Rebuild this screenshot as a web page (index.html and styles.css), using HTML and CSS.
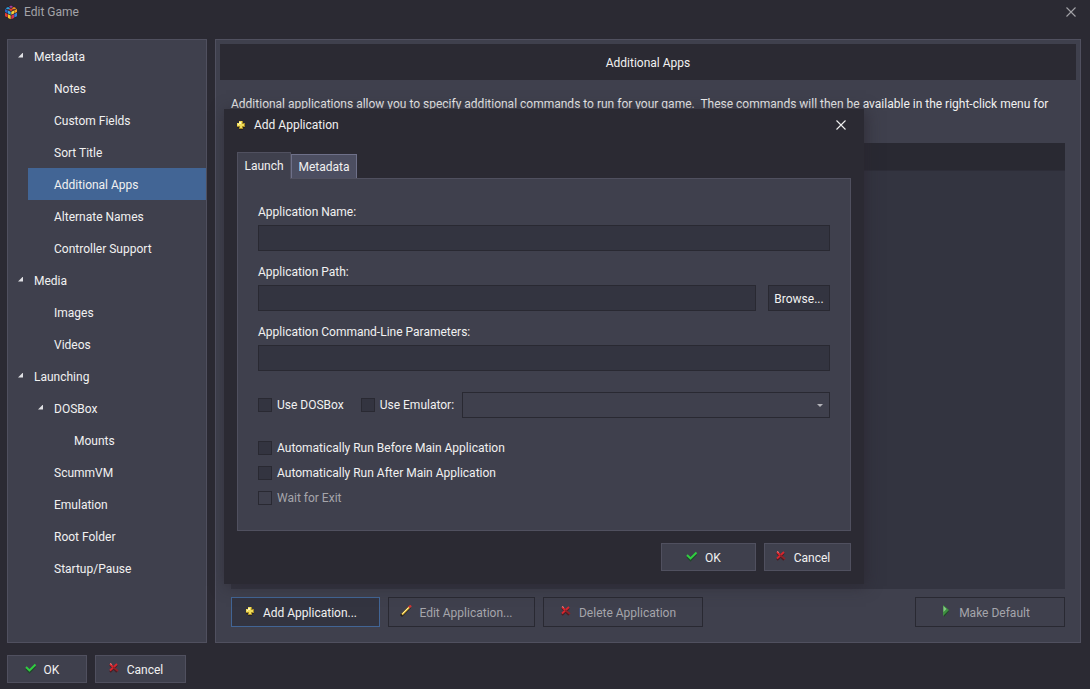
FILE: index.html
```html
<!DOCTYPE html>
<html lang="en">
<head>
    <meta charset="UTF-8">
    <meta name="viewport" content="width=device-width, initial-scale=1">
    <title>Edit Game</title>
    <link rel="stylesheet" href="styles.css">
</head>
<body>
    <!-- shared icons -->
    <svg class="icon-defs" aria-hidden="true">
        <symbol id="icon-close" viewBox="0 0 10 10">
            <path d="M0.5 0.5L9.5 9.5M9.5 0.5L0.5 9.5" fill="none" stroke="currentColor" stroke-width="1.1"/>
        </symbol>
        <symbol id="icon-plus" viewBox="0 0 12 12">
            <path d="M4 3h4v2h2v4h-2v2h-4v-2h-2v-4h2z" fill="#1e1a14" opacity="0.6"/>
            <path d="M4 2h4v2h2v4h-2v2h-4v-2h-2v-4h2z" fill="#a48a28"/>
            <path d="M4 2h3v3h2v2h-2v2h-2v-2h-3v-3h2z" fill="#f0dc58"/>
            <path d="M4 3h2v2h-2v1h-1v-1h1z" fill="#fff6b8"/>
        </symbol>
        <symbol id="icon-check" viewBox="0 0 12 12">
            <path d="M1 7l3.500 3.500l6-6" fill="none" stroke="#164a20" stroke-width="1.600" opacity="0.7"/>
            <path d="M1 5l3.500 3.500l6-6" fill="none" stroke="#2fd03f" stroke-width="1.900"/>
        </symbol>
        <symbol id="icon-cross" viewBox="0 0 12 12">
            <path d="M2 3l7 7M9 3l-7 7" fill="none" stroke="#4a1c22" stroke-width="2"/>
            <path d="M2 2l3 3M9 2l-7 6.500" fill="none" stroke="#d9262e" stroke-width="1.800"/>
            <path d="M5 5l5 4" fill="none" stroke="#8e2229" stroke-width="1.800"/>
            <path d="M2 1.500l2 1" stroke="#f07a78"/>
        </symbol>
        <symbol id="icon-pencil" viewBox="0 0 12 12">
            <path d="M1 11l9-9" fill="none" stroke="#26211d" stroke-width="2.800"/>
            <path d="M2 9.500l7.500-7.500" fill="none" stroke="#e8c040" stroke-width="1.800"/>
            <path d="M2.500 8.500l6-6" fill="none" stroke="#fff2a8" stroke-width="0.900"/>
            <path d="M9 2.500l2-2" fill="none" stroke="#cf3434" stroke-width="2.400"/>
        </symbol>
        <symbol id="icon-play" viewBox="0 0 12 12">
            <path d="M4 1l5 5l-5 6z" fill="#1f4a26"/>
            <path d="M3 0l6 5l-6 6z" fill="#3f8f41"/>
            <path d="M3.500 1l3 3l-3 3z" fill="#86c884"/>
        </symbol>
    </svg>

    <header class="titlebar">
        <svg class="logo" viewBox="0 0 14 15" aria-hidden="true">
            <path d="M7 0l6 3v9l-6 3l-6-3v-9z" fill="#26202c"/>
            <path d="M7 0.5l2 1.200l-2 1.200l-2-1.200z" fill="#a43fa0"/>
            <path d="M4 2l2.500 1.200l-2.500 1.300l-2.500-1.300z" fill="#2f9fd8"/>
            <path d="M10 2l2.500 1.200l-2.500 1.300l-2.500-1.300z" fill="#f08a20"/>
            <path d="M7 3.600l2.500 1.200l-2.500 1.300l-2.500-1.300z" fill="#e8402e"/>
            <path d="M1 4l2.700 1.300v3l-2.700-1.300z" fill="#2b63c4"/>
            <path d="M4 5.500l2.700 1.300v3l-2.700-1.300z" fill="#39b0e0"/>
            <path d="M1 7.700l2.700 1.300v3.500l-2.700-1.300z" fill="#e03c32"/>
            <path d="M4 9.200l2.700 1.300v3.700l-2.700-1.300z" fill="#f6c62b"/>
            <path d="M7.300 6.800l2.700-1.300v3l-2.700 1.300z" fill="#fbd93c"/>
            <path d="M10.300 5.300l2.700-1.300v3l-2.700 1.300z" fill="#f6a423"/>
            <path d="M7.300 10.500l2.700-1.300v3.700l-2.700 1.300z" fill="#d63550"/>
            <path d="M10.300 9l2.700-1.300v3.500l-2.700 1.300z" fill="#3a7edb"/>
        </svg>
        <span class="titlebar-text">Edit Game</span>
        <button class="close" type="button" aria-label="Close"><svg><use href="#icon-close"/></svg></button>
    </header>

    <main class="content">
        <nav class="sidebar">
            <ul class="tree">
                <li>
                    <a class="open" href="#metadata">Metadata</a>
                    <ul>
                        <li><a href="#notes">Notes</a></li>
                        <li><a href="#custom-fields">Custom Fields</a></li>
                        <li><a href="#sort-title">Sort Title</a></li>
                        <li><a class="selected" href="#additional-apps">Additional Apps</a></li>
                        <li><a href="#alternate-names">Alternate Names</a></li>
                        <li><a href="#controller-support">Controller Support</a></li>
                    </ul>
                </li>
                <li>
                    <a class="open" href="#media">Media</a>
                    <ul>
                        <li><a href="#images">Images</a></li>
                        <li><a href="#videos">Videos</a></li>
                    </ul>
                </li>
                <li>
                    <a class="open" href="#launching">Launching</a>
                    <ul>
                        <li>
                            <a class="open" href="#dosbox">DOSBox</a>
                            <ul>
                                <li><a href="#mounts">Mounts</a></li>
                            </ul>
                        </li>
                        <li><a href="#scummvm">ScummVM</a></li>
                        <li><a href="#emulation">Emulation</a></li>
                        <li><a href="#root-folder">Root Folder</a></li>
                        <li><a href="#startup-pause">Startup/Pause</a></li>
                    </ul>
                </li>
            </ul>
        </nav>

        <section class="panel">
            <h1 class="panel-title">Additional Apps</h1>
            <div class="panel-body">
                <p class="description">Additional applications allow you to specify additional commands to run for your game.&nbsp; These commands will then be available in the right-click menu for</p>
                <div class="grid">
                    <div class="grid-head"></div>
                </div>
                <div class="actions">
                    <button class="btn tool focused add" type="button"><svg><use href="#icon-plus"/></svg>Add Application...</button>
                    <button class="btn tool edit" type="button" disabled><svg><use href="#icon-pencil"/></svg>Edit Application...</button>
                    <button class="btn tool delete" type="button" disabled><svg><use href="#icon-cross"/></svg>Delete Application</button>
                    <button class="btn tool default" type="button" disabled><svg><use href="#icon-play"/></svg>Make Default</button>
                </div>
            </div>
        </section>
    </main>

    <footer class="footer">
        <button class="btn ok" type="button"><svg><use href="#icon-check"/></svg>OK</button>
        <button class="btn cancel" type="button"><svg><use href="#icon-cross"/></svg>Cancel</button>
    </footer>

    <div class="dialog" role="dialog" aria-labelledby="dialogTitle">
        <div class="dialog-title">
            <svg class="dialog-icon"><use href="#icon-plus"/></svg>
            <span id="dialogTitle">Add Application</span>
            <button class="close" type="button" aria-label="Close"><svg><use href="#icon-close"/></svg></button>
        </div>

        <form class="dialog-body">
            <div class="tabs" role="tablist">
                <button class="tab active" type="button" role="tab" aria-selected="true">Launch</button>
                <button class="tab" type="button" role="tab" aria-selected="false">Metadata</button>
            </div>
            <div class="tab-page">
                <div class="field">
                    <label for="appName">Application Name:</label>
                    <input class="text" type="text" id="appName" name="appName">
                </div>
                <div class="field">
                    <label for="appPath">Application Path:</label>
                    <div class="path-row">
                        <input class="text" type="text" id="appPath" name="appPath">
                        <button class="browse" type="button">Browse...</button>
                    </div>
                </div>
                <div class="field">
                    <label for="appParams">Application Command-Line Parameters:</label>
                    <input class="text" type="text" id="appParams" name="appParams">
                </div>
                <div class="emulator-row">
                    <label class="check"><input type="checkbox" name="useDosbox">Use DOSBox</label>
                    <label class="check"><input type="checkbox" name="useEmulator">Use Emulator:</label>
                    <div class="combo">
                        <select name="emulator" aria-label="Emulator" disabled></select>
                    </div>
                </div>
                <div class="checks">
                    <label class="check"><input type="checkbox" name="runBefore">Automatically Run Before Main Application</label>
                    <label class="check"><input type="checkbox" name="runAfter">Automatically Run After Main Application</label>
                    <label class="check off"><input type="checkbox" name="waitForExit" disabled>Wait for Exit</label>
                </div>
            </div>
            <div class="dialog-buttons">
                <button class="btn dialog-ok" type="button"><svg><use href="#icon-check"/></svg>OK</button>
                <button class="btn dialog-cancel" type="button"><svg><use href="#icon-cross"/></svg>Cancel</button>
            </div>
        </form>
    </div>
</body>
</html>
```
FILE: styles.css
```css
* {
    box-sizing: border-box;
}
body {
    margin: 0;
    min-height: 100vh;
    display: flex;
    flex-direction: column;
    background-color: #2b2a33;
    color: #f1f1f1;
    font-family: "Segoe UI", Roboto, "Open Sans", sans-serif;
    font-size: 12px;
    line-height: 16px;
}
button, input, select {
    font: inherit;
    color: inherit;
}
svg {
    display: block;
}
.icon-defs {
    position: absolute;
    width: 0;
    height: 0;
}

/* window title */
.titlebar {
    display: flex;
    align-items: center;
    height: 24px;
    margin-bottom: 15px;
    padding: 0 14px 0 4px;
    color: #a3a3a8;
}
.logo {
    width: 14px;
    height: 15px;
    margin-right: 6px;
}
.close {
    margin-left: auto;
    padding: 0;
    border: 0;
    background: none;
}
.close svg {
    width: 10px;
    height: 10px;
}

.content {
    flex: 1;
    display: grid;
    grid-template-columns: 200px 1fr;
    gap: 8px;
    padding: 0 9px 0 7px;
}
.sidebar, .panel {
    border: 1px solid #50505f;
    background-color: #3f404d;
}

/* tree */
.tree, .tree ul {
    margin: 0;
    padding: 0;
    list-style: none;
}
.tree ul {
    padding-left: 20px;
}
.tree a {
    display: flex;
    align-items: center;
    height: 32px;
    padding: 2px 0 0 26px;
    color: inherit;
    text-decoration: none;
}
.tree a.open {
    padding-left: 10px;
}
.tree a.open::before {
    content: "";
    width: 5px;
    height: 5px;
    margin: 0 11px 4px 0;
    background-color: #e0e0e4;
    clip-path: polygon(100% 0, 100% 100%, 0 100%);
}
.tree a.selected {
    background-color: #426595;
}

/* right side */
.panel {
    display: flex;
    flex-direction: column;
    padding: 4px;
}
.panel-title {
    margin: 0;
    padding: 11px 10px 9px;
    background-color: #2b2a33;
    font-size: 12px;
    font-weight: normal;
    text-align: center;
}
.panel-body {
    flex: 1;
    display: flex;
    flex-direction: column;
    padding: 16px 11px 11px;
}
.description {
    min-height: 32px;
    margin: 0 0 15px;
}
.grid {
    flex: 1;
    background-color: #333440;
}
.grid-head {
    height: 28px;
    background-color: #292932;
    border-bottom: 1px solid #2d2d38;
}
.actions {
    display: flex;
    gap: 8px;
    margin-top: 8px;
}

.btn {
    display: flex;
    align-items: center;
    justify-content: center;
    gap: 7px;
    height: 28px;
    padding: 2px 10px 0 0;
    border: 1px solid #50505f;
    background-color: #3f404d;
}
.btn svg {
    width: 12px;
    height: 12px;
    margin-bottom: 4px;
}
.btn.tool {
    height: 30px;
    border-color: #292932;
}
.btn.focused {
    border-color: #426595;
    background-color: #333440;
}
.btn:disabled {
    color: #a5a5ab;
}
.add {
    width: 149px;
}
.edit {
    width: 147px;
}
.delete {
    width: 160px;
}
.default {
    width: 150px;
    margin-left: auto;
}

.footer {
    display: flex;
    gap: 8px;
    padding: 12px 7px 6px;
}
.ok {
    width: 80px;
}
.cancel {
    width: 91px;
}

/* add application window */
.dialog {
    position: absolute;
    top: 109px;
    left: calc(50% - 321px);
    width: 640px;
    padding: 0 13px 13px;
    background-color: #2b2a33;
    box-shadow: 2px 2px 14px rgba(43, 38, 48, 0.7);
}
.dialog-title {
    display: flex;
    align-items: center;
    height: 32px;
    padding-right: 5px;
}
.dialog-icon {
    width: 12px;
    height: 12px;
    margin: 0 7px 0 -2px;
}
.tabs {
    display: flex;
    align-items: flex-end;
    margin-top: 11px;
}
.tab {
    width: 66px;
    height: 24px;
    padding: 0;
    border: 1px solid #6e7089;
    border-bottom: 0;
    background-color: #4c4e61;
}
.tab.active {
    position: relative;
    width: 54px;
    height: 27px;
    margin-bottom: -1px;
    border-color: #50505f;
    background-color: #3f404d;
}
.tab-page {
    padding: 25px 20px 20px;
    border: 1px solid #50505f;
    background-color: #3f404d;
}

.field {
    margin-bottom: 13px;
}
.field > label {
    display: block;
    margin-bottom: 5px;
}
.text {
    display: block;
    width: 100%;
    height: 26px;
    padding: 0 5px;
    border: 1px solid #292932;
    border-radius: 0;
    background-color: #333440;
    outline: none;
}
.path-row {
    display: flex;
    gap: 12px;
}
.browse {
    flex: none;
    width: 62px;
    height: 26px;
    padding: 2px 0 0;
    border: 1px solid #292932;
    background-color: #333440;
}

.emulator-row {
    display: flex;
    align-items: center;
    margin-top: 21px;
}
.check {
    display: flex;
    align-items: center;
    gap: 5px;
}
.check input {
    appearance: none;
    width: 14px;
    height: 14px;
    margin: 0;
    border: 1px solid #292932;
    background-color: #333440;
}
.check.off {
    color: #a5a5ab;
}
.check.off input {
    background-color: #3f404d;
}
.emulator-row .check + .check {
    margin-left: 17px;
}
.combo {
    position: relative;
    flex: 1;
    margin-left: 8px;
}
.combo select {
    appearance: none;
    display: block;
    width: 100%;
    height: 26px;
    border: 1px solid #292932;
    border-radius: 0;
    background-color: #3f404d;
    opacity: 1;
}
.combo::after {
    content: "";
    position: absolute;
    top: 12px;
    right: 7px;
    width: 6px;
    height: 3px;
    background-color: #b4b4ba;
    clip-path: polygon(0 0, 100% 0, 50% 100%);
}
.checks {
    margin-top: 17px;
}
.checks .check {
    height: 25px;
}

.dialog-buttons {
    display: flex;
    justify-content: flex-end;
    gap: 8px;
    margin-top: 12px;
}
.dialog-ok {
    width: 95px;
}
.dialog-cancel {
    width: 87px;
}
```
